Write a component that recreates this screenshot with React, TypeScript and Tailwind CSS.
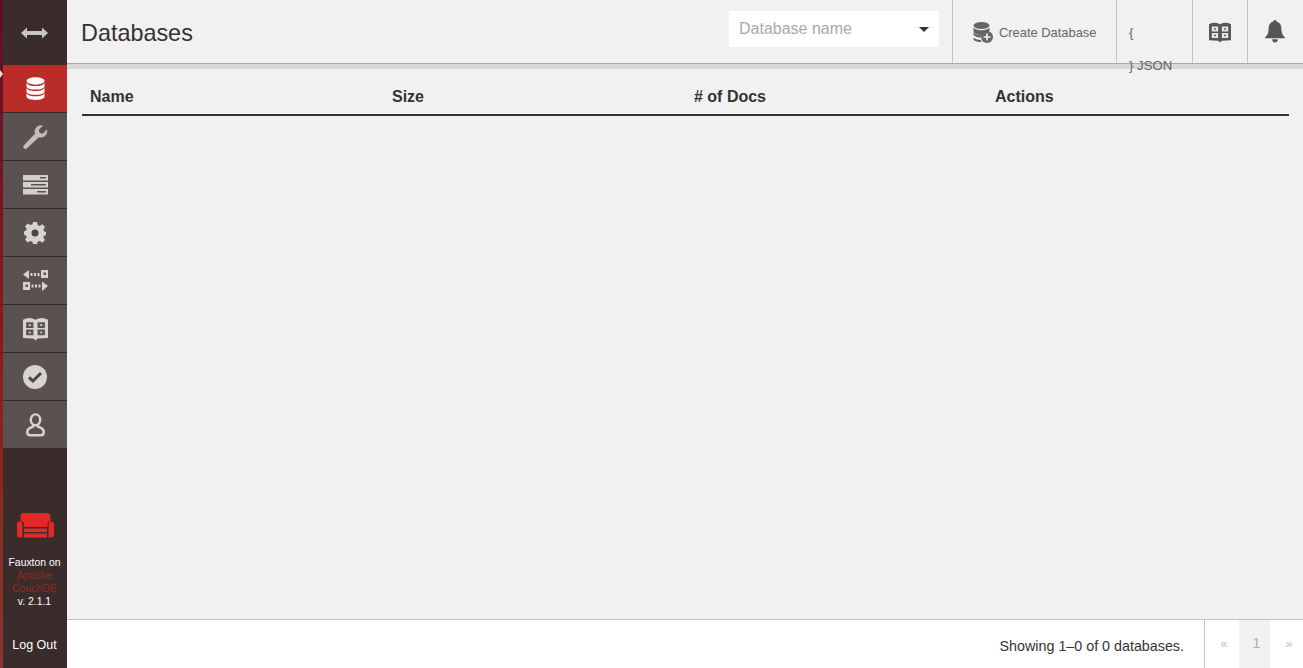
const Database = ({ className = '' }: { className?: string }) => (
  <svg viewBox="0 0 20 25" className={className} fill="currentColor">
    <ellipse cx="10" cy="4" rx="9.5" ry="4" />
    <path d="M.5 6.200C2 8.600 6 9.400 10 9.400s8-.8 9.500-3.200V9.500c0 2.200-4.300 3.600-9.500 3.600S.5 11.700.5 9.500z" />
    <path d="M.5 11.500C2 13.900 6 14.700 10 14.700s8-.8 9.500-3.200V15c0 2.200-4.300 3.600-9.500 3.600S.5 17.200.5 15z" />
    <path d="M.5 17C2 19.400 6 20.200 10 20.200s8-.8 9.500-3.200v3.500c0 2.200-4.300 3.600-9.500 3.600S.5 22.700.5 20.500z" />
  </svg>
);

const DatabaseAdd = () => (
  <svg viewBox="0 0 20 21" className="w-[20px] h-[21px] text-[#666666]" fill="currentColor">
    <ellipse cx="8.500" cy="3.500" rx="8" ry="3.500" />
    <path d="M.5 5.500C2 7.500 5 8.200 8.500 8.200s6.500-.7 8-2.700v3c0 .5-.3 1-.8 1.400-3 0-5.700 1.500-6.700 3.100-4.700 0-8.500-1.300-8.500-3.500z" />
    <path d="M.5 10.500c1.500 2 4 2.700 8 2.700-.3.800-.5 1.400-.5 2.300-4 0-7.500-1.300-7.500-3.200z" />
    <path d="M.5 15.500c1.500 1.700 4 2.300 7.500 2.400 0 .8.300 1.400.6 2.100-4.500 0-8.100-1.200-8.100-3.100z" />
    <circle cx="14" cy="15" r="6" />
    <path d="M13.200 11.500h1.600v2.700h2.700v1.600h-2.700v2.700h-1.600v-2.700h-2.700v-1.600h2.700z" fill="#f1f1f1" />
  </svg>
);

const Book = ({ className = '', cut, dot }: { className?: string; cut: string; dot: string }) => (
  <svg viewBox="0 0 24 24" className={className}>
    <path fill={dot} d="M0 3.500 Q6 .5 12 3.500 Q18 .5 24 3.500V21 L14 21.500 L12 23.500 L10 21.500 L0 21z" />
    <path fill={cut} d="M3 6h7v5.500H3zM14 6h7v5.500h-7zM3 13h7v5.500H3zM14 13h7v5.500h-7z" />
    <path fill={dot} d="M5.500 8h2v1.500h-2zM16.500 8h2v1.500h-2zM5.500 15h2v1.500h-2zM16.500 15h2v1.500h-2z" />
  </svg>
);

const Resize = () => (
  <svg viewBox="0 0 27 12" className="w-[27px] h-[12px] text-[#c9c5c2]" fill="currentColor">
    <path d="M0 6 6 .5V4h15V.5L27 6l-6 5.500V8H6v3.500z" />
  </svg>
);

const Wrench = () => (
  <svg viewBox="0 0 26 26" className="w-[25px] h-[25px] text-[#c2bebb]" fill="currentColor">
    <path d="M25 5.500c.6 2.800-.2 5.300-2.200 7-1.800 1.500-4.200 1.900-6.300 1.200L4.200 25.300c-1 .9-2.400.9-3.300 0s-.9-2.300 0-3.200l11.600-12C11.800 8 12.200 5.500 13.800 3.700 15.600 1.700 18.200 1 20.800 1.600L16.500 6l.8 3.400 3.400.8z" />
  </svg>
);

const Servers = () => (
  <svg viewBox="0 0 25 20" className="w-[25px] h-[20px] text-[#d2cfcc]">
    <rect fill="currentColor" x="0" y="0" width="25" height="5.500" />
    <rect fill="currentColor" x="0" y="7" width="25" height="5.500" />
    <rect fill="currentColor" x="0" y="14" width="25" height="5.500" />
    <rect fill="#5a5250" x="17" y="2" width="6" height="1.500" />
    <rect fill="#5a5250" x="8" y="9" width="15" height="1.500" />
    <rect fill="#5a5250" x="14" y="16" width="9" height="1.500" />
  </svg>
);

const Cog = () => (
  <svg viewBox="0 0 22 22" className="w-[22px] h-[22px] text-[#d6d3d0]">
    <path
      fill="currentColor"
      d="M9 0h4l.6 3 2.100.9L18.300 2.200 21 5l-1.700 2.500.9 2.100 1.800.4v3l-1.800.4-.9 2.100 1.700 2.500-2.800 2.800-2.500-1.700-2.100.9L13 22H9l-.6-2.200-2.100-.9-2.500 1.700L1 17.800l1.700-2.500-.9-2.100L0 12.800V9.200l1.800-.4.900-2.100L1 4.200 3.800 1.400l2.500 1.700 2.100-.9z"
    />
    <circle cx="11" cy="11" r="3.500" fill="#4d4644" />
  </svg>
);

const Replicate = () => (
  <svg viewBox="0 0 25 23" className="w-[25px] h-[23px] text-[#d6d3d0]">
    <path fill="currentColor" d="M0 5.500 6 1v9z" />
    <path fill="currentColor" d="M7.500 4h2v3h-2zM11 4h2v3h-2zM14.500 4h2v3h-2z" />
    <path fill="currentColor" d="M18 1h7v8h-7z" />
    <rect fill="#5a5250" x="20.500" y="3.500" width="2.500" height="2.500" />
    <path fill="currentColor" d="M0 13h7v8H0z" />
    <rect fill="#5a5250" x="2.500" y="15.500" width="2.500" height="2.500" />
    <path fill="currentColor" d="M8.500 15.500h2v3h-2zM12 15.500h2v3h-2zM15.500 15.500h2v3h-2z" />
    <path fill="currentColor" d="M19 12.500 25 17l-6 5z" />
  </svg>
);

const Check = () => (
  <svg viewBox="0 0 24 24" className="w-[24px] h-[24px]">
    <circle cx="12" cy="12" r="12" fill="#d6d3d0" />
    <path d="M6 12.500l4 3.500 8-8" fill="none" stroke="#4d4644" strokeWidth="3" />
  </svg>
);

const User = () => (
  <svg viewBox="0 0 20 25" className="w-[19px] h-[24px]" fill="none" stroke="#d6d3d0" strokeWidth="2.600">
    <ellipse cx="10" cy="7" rx="5" ry="5.700" />
    <path d="M7.500 12.500v1.500l-3.500 1.700C2.300 16.500 1.300 18 1.300 19.800c0 2 1.200 3.500 3.200 3.500h11c2 0 3.200-1.500 3.200-3.500 0-1.800-1-3.300-2.700-4.100L12.500 14v-1.500" />
  </svg>
);

const Couch = () => (
  <svg viewBox="0 0 37 25" className="w-[37px] h-[25px] text-[#e12a27] ml-[2px]" fill="currentColor">
    <path d="M3.500 3c0-1.700 1.200-3 3-3h24c1.800 0 3 1.300 3 3v5c-2 .3-3 1.700-3 3v3H7v-3c0-1.300-1-2.700-3.500-3z" />
    <path d="M0 11c0-1.500 1-2.500 2.500-2.500S5.500 9.500 5.500 11v13.500H3c-2 0-3-1-3-3z" />
    <path d="M31.500 11c0-1.500 1-2.500 2.500-2.500S37 9.500 37 11v10.500c0 2-1 3-3 3h-2.500z" />
    <path d="M7 15.500h23v3.500H7zM7 20.500h23v4H7z" />
  </svg>
);

const NavItem = ({ children, active }: { children: React.ReactNode; active?: boolean }) => (
  <div
    className={
      active
        ? 'h-[47px] flex items-center justify-center bg-[#b92c28] text-white'
        : 'h-[48px] flex items-center justify-center bg-[#5a5250] border-t border-[#352a29]'
    }
  >
    {children}
  </div>
);

export default function App() {
  return (
    <div className="flex h-[668px] w-[1303px] overflow-hidden bg-[#f1f1f1] font-['Liberation_Sans',sans-serif]">
      {/* Sidebar */}
      <div className="relative w-[3px] shrink-0 bg-linear-to-b from-[#5e0f25] via-[#8b1a1a] to-[#8a3530]">
        <span className="absolute left-0 top-[70px] w-0 h-0 border-y-[4px] border-l-[3px] border-y-transparent border-l-[#e8dcdc]" />
      </div>
      <div className="w-[64px] shrink-0 flex flex-col bg-[#3a2c2b]">
        <div className="h-[65px] flex items-center justify-center pr-px">
          <Resize />
        </div>
        <NavItem active>
          <Database className="w-[19px] h-[24px]" />
        </NavItem>
        <NavItem>
          <Wrench />
        </NavItem>
        <NavItem>
          <Servers />
        </NavItem>
        <NavItem>
          <Cog />
        </NavItem>
        <NavItem>
          <Replicate />
        </NavItem>
        <NavItem>
          <Book className="w-[25px] h-[25px]" cut="#5a5250" dot="#d6d3d0" />
        </NavItem>
        <NavItem>
          <Check />
        </NavItem>
        <NavItem>
          <User />
        </NavItem>

        <div className="mt-auto flex flex-col items-center text-center pr-px">
          <Couch />
          <div className="mt-[18px] text-[10.4px] leading-[13px] text-white">
            <div>Fauxton on</div>
            <div className="text-[#8e2825]">Apache</div>
            <div className="text-[#8e2825]">CouchDB</div>
            <div>v. 2.1.1</div>
          </div>
          <div className="mt-[30px] mb-[16px] text-[12.5px] leading-[14px] text-white">Log Out</div>
        </div>
      </div>

      {/* Main */}
      <div className="flex-1 flex flex-col min-w-0">
        <div className="h-[64px] flex border-b border-[#a9a9a9] shrink-0">
          <h1 className="ml-[14px] mt-[18px] text-[23.4px] leading-[30px] text-[#333333] font-normal">Databases</h1>

          <div className="ml-auto mt-[11px] mr-[13px] w-[210px] h-[36px] bg-white flex items-center justify-between pl-[10px] pr-[10px]">
            <span className="text-[16px] text-[#a9a9a9]">Database name</span>
            <span className="w-0 h-0 border-x-[5px] border-t-[5px] border-x-transparent border-t-[#333333]" />
          </div>

          <div className="w-[164px] border-l border-[#c4c4c4] flex items-center pl-[20px] pt-[2px] text-[#666666]">
            <DatabaseAdd />
            <span className="ml-[6px] text-[12.9px]">Create Database</span>
          </div>

          <div className="relative w-[76px] border-l border-[#c4c4c4] text-[13.2px] text-[#666666]">
            <span className="absolute left-[12px] top-[23px]">{'{'}</span>
            <span className="absolute left-[12px] top-[56px] whitespace-nowrap">{'} JSON'}</span>
          </div>

          <div className="w-[55px] border-l border-[#c4c4c4] flex items-center justify-center">
            <Book className="w-[22px] h-[22px]" cut="#e4e7ea" dot="#555555" />
          </div>

          <div className="w-[56px] border-l border-[#c4c4c4] flex items-center justify-center text-[#555555]">
            <svg viewBox="0 0 22 24" className="w-[22px] h-[23px] -ml-px" fill="currentColor">
              <path d="M11 0c1 0 1.600.7 1.600 1.600 3.500.8 5 3.500 5 7 0 4 1 7.500 4.400 10.400H0c3.400-2.900 4.400-6.400 4.400-10.400 0-3.500 1.500-6.200 5-7C9.400.7 10 0 11 0zM8 20h6c0 2-1.300 3.500-3 3.500S8 22 8 20z" />
            </svg>
          </div>
        </div>
        <div className="h-[5px] bg-[#d8d8d8] shrink-0" />

        {/* Table */}
        <div className="flex-1 pl-[15px] pr-[14px]">
          <div className="grid grid-cols-[302px_302px_301px_1fr] h-[47px] pt-[10px] border-b-2 border-[#333333] text-[16px] font-bold text-[#333333] items-center">
            <div className="pl-[8px]">Name</div>
            <div className="pl-[8px]">Size</div>
            <div className="pl-[8px]"># of Docs</div>
            <div className="pl-[8px]">Actions</div>
          </div>
        </div>

        {/* Footer */}
        <div className="h-[49px] shrink-0 bg-white border-t border-[#c4c4c4] flex items-center justify-end">
          <span className="text-[14.300px] text-[#333333] mr-[20px] pt-[6px]">Showing 1–0 of 0 databases.</span>
          <div className="h-full w-[99px] border-l border-[#c4c4c4] flex text-[#b0b0b0]">
            <div className="w-[34px] flex items-center justify-center text-[12px] pl-[4px] text-[#bbbbbb]">«</div>
            <div className="w-[32px] flex items-center justify-center bg-[#f1f1f1] text-[15px] pl-[4px] pb-[2px]">1</div>
            <div className="w-[33px] flex items-center justify-center text-[12px] pl-[5px] text-[#bbbbbb]">»</div>
          </div>
        </div>
      </div>
    </div>
  );
}
